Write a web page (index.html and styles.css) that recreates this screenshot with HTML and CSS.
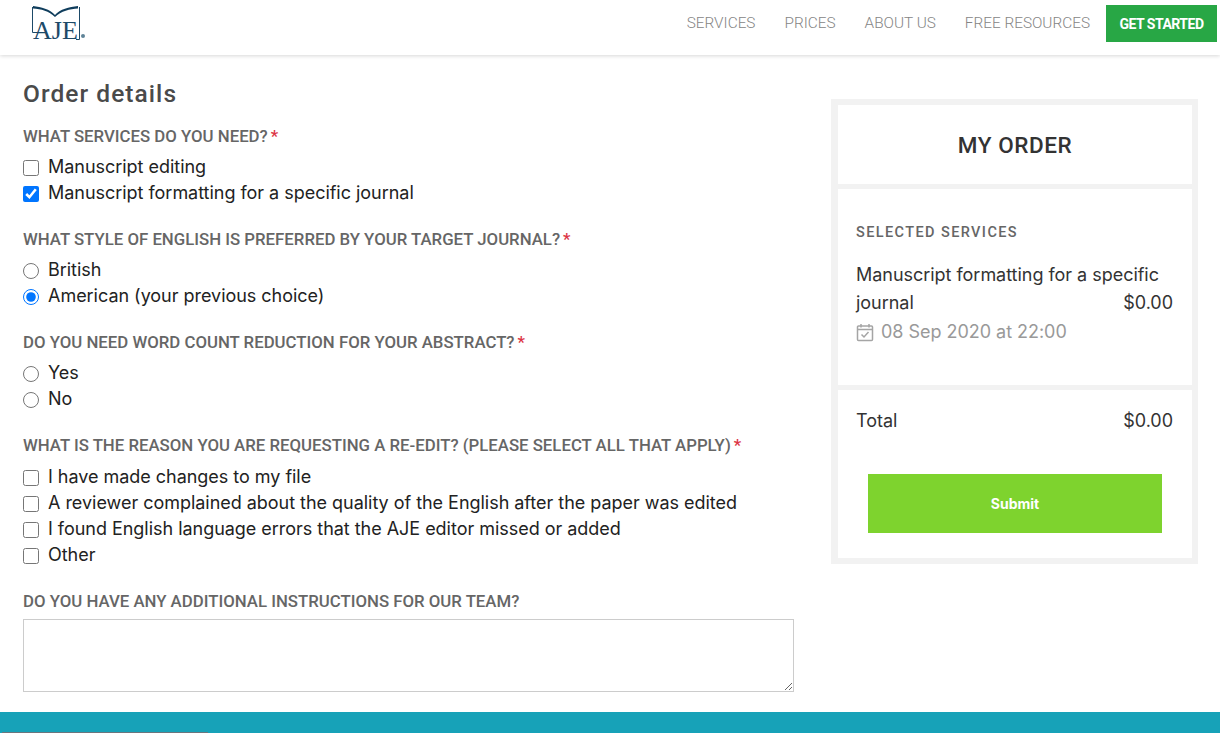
FILE: index.html
```html
<!DOCTYPE html>
<html lang="en">
<head>
<meta charset="utf-8">
<title>Order details</title>
<link rel="stylesheet" href="styles.css">
</head>
<body>
<header class="topbar">
  <a class="logo" href="#">
    <svg width="60" height="46" viewBox="0 0 60 46">
      <path class="logo-cover" d="M4 1 C12 2 21 4 26 10 C31 4 40 2 49 1 L49 3.500 C41 4 32 6 26 12 C20 6 12 4 4 3.500 Z"/>
      <path class="logo-line" d="M3.500 2 V27.500 H9 M50.500 2 V34.500 H47"/>
      <text class="logo-text" x="4" y="34">AJE</text>
      <circle class="logo-reg" cx="54" cy="31" r="2"/>
    </svg>
  </a>
  <nav class="nav">
    <a href="#">SERVICES</a>
    <a href="#">PRICES</a>
    <a href="#">ABOUT US</a>
    <a href="#">FREE RESOURCES</a>
    <a class="cta" href="#">GET STARTED</a>
  </nav>
</header>
<main class="content">
  <form class="form">
    <h1>Order details</h1>
    <fieldset class="group">
      <legend class="q">WHAT SERVICES DO YOU NEED?<span class="req">*</span></legend>
      <label class="opt"><input type="checkbox">Manuscript editing</label>
      <label class="opt"><input type="checkbox" checked>Manuscript formatting for a specific journal</label>
    </fieldset>
    <fieldset class="group">
      <legend class="q">WHAT STYLE OF ENGLISH IS PREFERRED BY YOUR TARGET JOURNAL?<span class="req">*</span></legend>
      <label class="opt"><input type="radio" name="style">British</label>
      <label class="opt"><input type="radio" name="style" checked>American (your previous choice)</label>
    </fieldset>
    <fieldset class="group">
      <legend class="q">DO YOU NEED WORD COUNT REDUCTION FOR YOUR ABSTRACT?<span class="req">*</span></legend>
      <label class="opt"><input type="radio" name="wc">Yes</label>
      <label class="opt"><input type="radio" name="wc">No</label>
    </fieldset>
    <fieldset class="group">
      <legend class="q q-wide">WHAT IS THE REASON YOU ARE REQUESTING A RE-EDIT? (PLEASE SELECT ALL THAT APPLY)<span class="req">*</span></legend>
      <label class="opt"><input type="checkbox">I have made changes to my file</label>
      <label class="opt"><input type="checkbox">A reviewer complained about the quality of the English after the paper was edited</label>
      <label class="opt"><input type="checkbox">I found English language errors that the AJE editor missed or added</label>
      <label class="opt"><input type="checkbox">Other</label>
    </fieldset>
    <div class="group group-last">
      <div class="q q-notes">DO YOU HAVE ANY ADDITIONAL INSTRUCTIONS FOR OUR TEAM?</div>
      <textarea class="notes"></textarea>
    </div>
  </form>
  <aside class="order">
    <h2 class="order-title">MY ORDER</h2>
    <section class="order-services">
      <h3>SELECTED SERVICES</h3>
      <div class="name-first">Manuscript formatting for a specific</div>
      <div class="line"><span>journal</span><span>$0.00</span></div>
      <div class="date">
        <svg width="18" height="19" viewBox="0 0 18 19">
          <path class="cal" d="M2.500 3 H15.500 A1 1 0 0 1 16.500 4 V16.500 A1 1 0 0 1 15.500 17.500 H2.500 A1 1 0 0 1 1.500 16.500 V4 A1 1 0 0 1 2.500 3 Z M1.500 6.500 H16.500 M5 1 V4.500 M13 1 V4.500 M5.500 11.500 L8 14 L12.500 9"/>
        </svg>
        08 Sep 2020 at 22:00
      </div>
    </section>
    <section class="order-total">
      <div class="line"><span>Total</span><span>$0.00</span></div>
      <button class="submit" type="button">Submit</button>
    </section>
  </aside>
</main>
<footer class="foot"><div class="foot-strip"></div></footer>
</body>
</html>
```
FILE: styles.css
```css
* { box-sizing: border-box; }
html, body { margin: 0; height: 733px; overflow: hidden; }
body {
  background: #fff;
  color: #222;
  font-family: Inter, "Noto Sans", sans-serif;
  font-size: 18px;
  letter-spacing: -0.03px;
  display: flex;
  flex-direction: column;
}
.topbar {
  height: 55px;
  flex: none;
  display: flex;
  justify-content: space-between;
  padding: 5px 3px 0 29px;
  box-shadow: 0 1px 4px rgba(0,0,0,.16);
}
.logo { display: block; height: 46px; }
.logo-cover { fill: #0f3d5c; }
.logo-line { fill: none; stroke: #1d4a68; stroke-width: 1; }
.logo-text { font-family: "Liberation Serif", serif; font-size: 26px; fill: #1d4a68; letter-spacing: 0; }
.logo-reg { fill: #5f8398; }
.nav { display: flex; align-items: flex-start; font-family: Roboto, sans-serif; font-size: 15.350px; font-weight: 300; letter-spacing: 0; }
.nav a { color: #858585; text-decoration: none; margin: 10px 0 0 29px; line-height: 17px; }
.nav .cta {
  margin: 0 0 0 16px;
  background: #28a745;
  color: #fff;
  font-weight: 700;
  font-size: 14px;
  letter-spacing: -0.500px;
  width: 111px;
  height: 37px;
  line-height: 38px;
  text-align: center;
}
.content { flex: 1; min-height: 0; display: flex; align-items: flex-start; padding-left: 23px; }
.form { width: 771px; flex: none; }
h1 {
  margin: 25px 0 16px;
  font-family: Roboto, sans-serif;
  font-size: 24.500px;
  font-weight: 500;
  line-height: 28px;
  letter-spacing: 1.050px;
  color: #4a4a4a;
}
.group { border: 0; margin: 0 0 22px; padding: 0; min-width: 0; }
.group-last { margin-bottom: 0; }
.q, legend.q {
  display: block;
  padding: 0;
  font-family: Roboto, sans-serif;
  font-size: 16.800px;
  font-weight: 500;
  line-height: 24px;
  letter-spacing: 0;
  color: #666;
  margin-bottom: 5px;
}
legend.q { float: left; width: 100%; }
legend.q-wide { margin-bottom: 6px; }
.q.q-notes { margin-bottom: 6px; }
.req { color: #dc3545; margin-left: 3px; }
.opt { display: flex; align-items: center; clear: both; height: 26px; color: #222; }
.opt input { width: 16px; height: 16px; margin: 4px 9px 0 0; flex: none; }
.notes {
  display: block;
  width: 100%;
  height: 73px;
  border: 1px solid #ccc;
  border-radius: 0;
  background: #fff;
}
.order {
  width: 367px;
  margin: 44px 0 0 37px;
  border: 6px solid #f2f2f2;
  border-left-width: 7px;
  flex: none;
}
.order-title {
  margin: 0;
  height: 79px;
  line-height: 81px;
  text-align: center;
  font-family: Roboto, sans-serif;
  font-size: 22.500px;
  font-weight: 500;
  letter-spacing: 0.550px;
  color: #333;
}
.order-services { border-top: 5px solid #f2f2f2; padding: 34px 19px 40px 18px; height: 201px; }
h3 {
  margin: 0 0 18px;
  font-family: Roboto, sans-serif;
  font-size: 14.500px;
  font-weight: 500;
  letter-spacing: 1.400px;
  line-height: 20px;
  color: #666;
}
.name-first { line-height: 28px; color: #333; }
.line { display: flex; justify-content: space-between; line-height: 28px; color: #333; }
.date { display: flex; align-items: center; gap: 7px; margin-top: 1px; line-height: 28px; color: #999; }
.cal { fill: none; stroke: #a5a5a5; stroke-width: 1.500; }
.order-total { border-top: 5px solid #f2f2f2; padding: 17px 19px 25px 18px; height: 173px; }
.submit {
  display: block;
  width: 294px;
  height: 59px;
  margin: 39px 0 0 12px;
  border: 0;
  background: #7ed32e;
  color: #fff;
  font-family: Inter, sans-serif;
  font-size: 14px;
  font-weight: 700;
}
.foot { height: 21px; flex: none; background: #17a2b8; position: relative; }
.foot-strip { position: absolute; left: 2px; bottom: 0; width: 206px; height: 1px; background: #6c757d; }
```
